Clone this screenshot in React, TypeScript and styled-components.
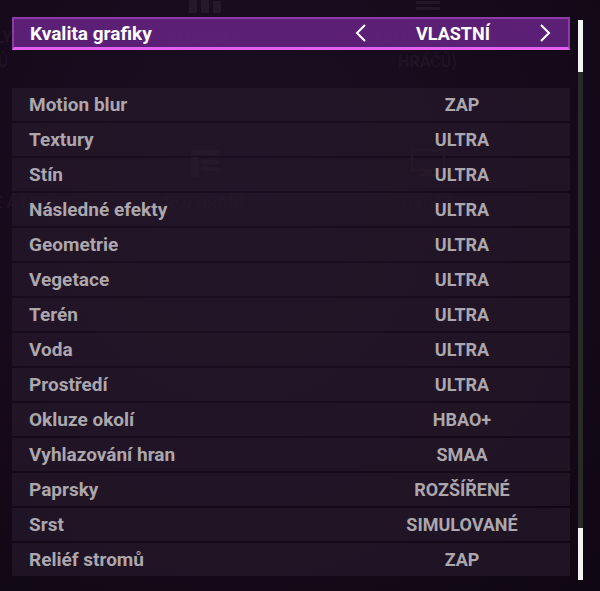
import styled, { createGlobalStyle } from "styled-components";

interface Setting {
  label: string;
  value: string;
}

const settings: Setting[] = [
  { label: "Motion blur", value: "ZAP" },
  { label: "Textury", value: "ULTRA" },
  { label: "Stín", value: "ULTRA" },
  { label: "Následné efekty", value: "ULTRA" },
  { label: "Geometrie", value: "ULTRA" },
  { label: "Vegetace", value: "ULTRA" },
  { label: "Terén", value: "ULTRA" },
  { label: "Voda", value: "ULTRA" },
  { label: "Prostředí", value: "ULTRA" },
  { label: "Okluze okolí", value: "HBAO+" },
  { label: "Vyhlazování hran", value: "SMAA" },
  { label: "Paprsky", value: "ROZŠÍŘENÉ" },
  { label: "Srst", value: "SIMULOVANÉ" },
  { label: "Reliéf stromů", value: "ZAP" },
];

// faint menu tiles behind the settings overlay
const ghosts = [
  { icon: "none", lines: ["PROFILY", "HRÁČŮ"] },
  { icon: "chart", lines: ["ŽEBŘÍČKY"] },
  { icon: "list", lines: ["STATISTIKY (PRO", "HRÁČŮ)"] },
  { icon: "none", lines: [] },
  { icon: "mouse", lines: ["KLÁVESNICE A MYŠ"] },
  { icon: "layout", lines: ["ROZHRANÍ"] },
  { icon: "monitor", lines: ["OBRAZ"] },
];

const ghostColor = "rgba(255,255,255,0.055)";

function GhostIcon({ kind }: { kind: string }) {
  const c = ghostColor;
  if (kind === "chart")
    return (
      <svg width="36" height="30" viewBox="0 0 36 30">
        <rect x="2" y="14" width="8" height="16" fill={c} />
        <rect x="14" y="2" width="8" height="28" fill={c} />
        <rect x="26" y="18" width="8" height="12" fill={c} />
      </svg>
    );
  if (kind === "list")
    return (
      <svg width="30" height="30" viewBox="0 0 30 30">
        {[6, 12, 18, 24].map((y) => (
          <rect key={y} x="3" y={y} width="24" height="3" fill={c} />
        ))}
      </svg>
    );
  if (kind === "layout")
    return (
      <svg width="28" height="30" viewBox="0 0 28 30">
        <rect x="0" y="2" width="28" height="5" fill={c} />
        <rect x="0" y="9" width="8" height="20" fill={c} />
        <rect x="10" y="12" width="18" height="4" fill={c} />
        <rect x="10" y="19" width="18" height="4" fill={c} />
      </svg>
    );
  if (kind === "monitor")
    return (
      <svg width="36" height="30" viewBox="0 0 36 30">
        <rect x="2" y="2" width="32" height="20" fill="none" stroke={c} strokeWidth="2" />
        <rect x="14" y="22" width="8" height="4" fill={c} />
        <rect x="9" y="26" width="18" height="2" fill={c} />
      </svg>
    );
  if (kind === "mouse")
    return (
      <svg width="20" height="30" viewBox="0 0 20 30">
        <rect x="3" y="4" width="14" height="22" rx="7" fill="none" stroke={c} strokeWidth="2" />
      </svg>
    );
  return <svg width="30" height="30" />;
}

function Chevron({ dir }: { dir: "left" | "right" }) {
  return (
    <svg width="12" height="20" viewBox="0 0 12 20">
      <path
        d={dir === "left" ? "M10 2 L2 10 L10 18" : "M2 2 L10 10 L2 18"}
        fill="none"
        stroke="#ffffff"
        strokeWidth="2"
      />
    </svg>
  );
}

function App() {
  return (
    <Screen>
      <GlobalStyle />
      <GhostMenu aria-hidden="true">
        {ghosts.map((g, i) => (
          <GhostItem key={i}>
            <GhostIcon kind={g.icon} />
            <GhostLabel>
              {g.lines.map((l) => (
                <div key={l}>{l}</div>
              ))}
            </GhostLabel>
          </GhostItem>
        ))}
      </GhostMenu>

      <Panel>
        <Header>
          <HeaderLabel>Kvalita grafiky</HeaderLabel>
          <Selector>
            <Chevron dir="left" />
            <SelectorValue>VLASTNÍ</SelectorValue>
            <Chevron dir="right" />
          </Selector>
        </Header>
        <List>
          {settings.map((s) => (
            <Row key={s.label}>
              <Label>{s.label}</Label>
              <Value>{s.value}</Value>
            </Row>
          ))}
        </List>
      </Panel>

      <Scrollbar>
        <TrackEnd />
        <Thumb />
        <TrackEnd />
      </Scrollbar>
    </Screen>
  );
}

const GlobalStyle = createGlobalStyle`
  body {
    margin: 0;
    background: #130914;
    font-family: Roboto, "Liberation Sans", sans-serif;
  }
`;

const Screen = styled.div`
  position: relative;
  width: 600px;
  height: 591px;
  overflow: hidden;
  background: radial-gradient(ellipse at 40% 30%, #1c0e22 0%, #150a1a 60%, #0f0712 100%);
`;

const GhostMenu = styled.div`
  display: grid;
  grid-template-columns: repeat(4, 223px);
  grid-auto-rows: 165px;
  margin-left: -130px;
  transform: translateY(-17px);
`;

const GhostItem = styled.div`
  display: flex;
  flex-direction: column;
  align-items: center;
  gap: 13px;
`;

const GhostLabel = styled.div`
  font-weight: 700;
  font-size: 16px;
  line-height: 24px;
  text-align: center;
  white-space: nowrap;
  color: ${ghostColor};
`;

const Panel = styled.div`
  position: absolute;
  left: 12px;
  top: 17px;
  width: 558px;
`;

const Header = styled.div`
  display: flex;
  align-items: center;
  justify-content: space-between;
  box-sizing: border-box;
  height: 33px;
  padding-left: 16px;
  padding-right: 15px;
  background: rgba(96, 34, 124, 0.94);
  border: 2px solid #8b3aa6;
  border-bottom: 3px solid #e260f2;
`;

const HeaderLabel = styled.div`
  color: #ffffff;
  font-weight: 700;
  font-size: 19px;
`;

const Selector = styled.div`
  display: flex;
  align-items: center;
  justify-content: space-between;
  width: 200px;
  padding: 0 2px;
  box-sizing: border-box;
`;

const SelectorValue = styled.div`
  color: #ffffff;
  font-weight: 700;
  font-size: 18px;
`;

const List = styled.div`
  display: flex;
  flex-direction: column;
  gap: 2px;
  margin-top: 38px;
`;

const Row = styled.div`
  display: grid;
  grid-template-columns: 1fr 200px;
  align-items: center;
  height: 33px;
  padding-left: 17px;
  padding-right: 8px;
  background: rgba(36, 24, 42, 0.74);
`;

const Label = styled.div`
  color: #aca6ad;
  font-weight: 700;
  font-size: 19px;
`;

const Value = styled.div`
  color: #aca6ad;
  font-weight: 700;
  font-size: 18px;
  text-align: center;
`;

const Scrollbar = styled.div`
  position: absolute;
  left: 578px;
  top: 20px;
  width: 5px;
  height: 560px;
  display: flex;
  flex-direction: column;
`;

const TrackEnd = styled.div`
  height: 52px;
  background: #f4f4f4;
`;

const Thumb = styled.div`
  flex: 1;
  background: #2a2a2a;
`;

export default App;
